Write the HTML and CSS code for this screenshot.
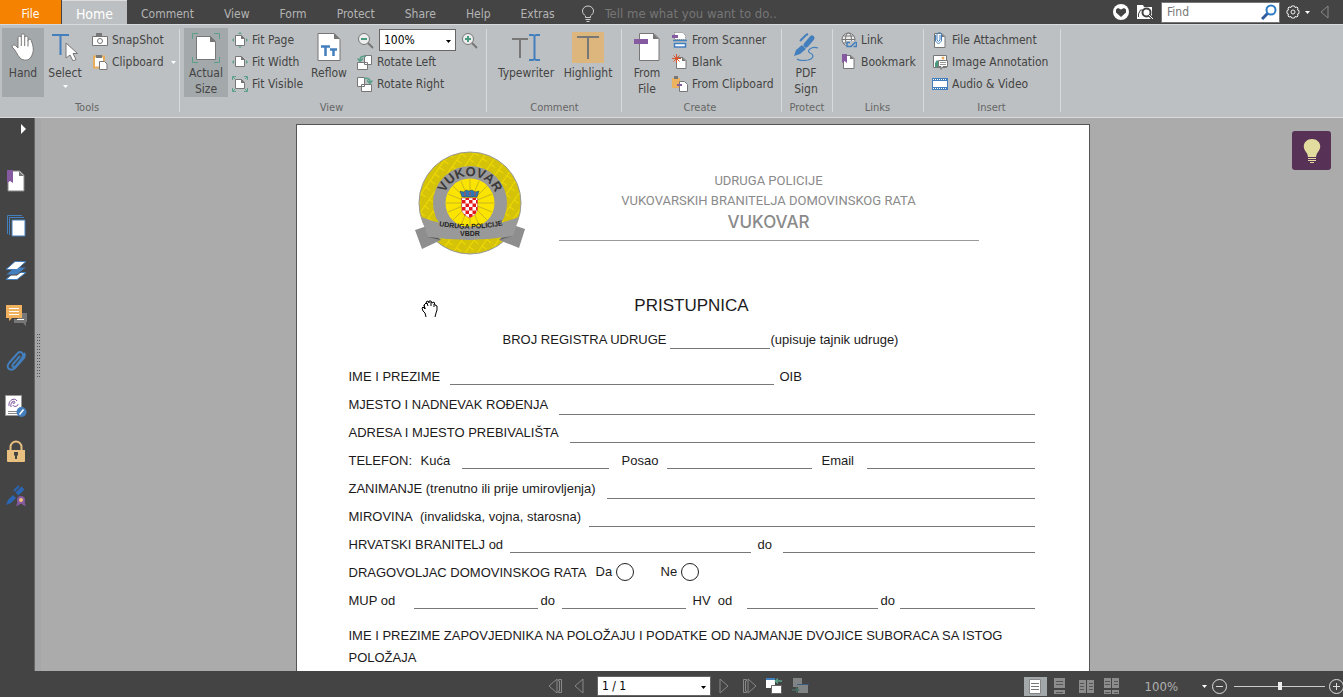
FILE: index.html
```html
<!DOCTYPE html>
<html lang="en">
<head>
<meta charset="utf-8">
<title>PDF Reader</title>
<link rel="stylesheet" href="styles.css">
</head>
<body>
<header class="tabbar">
  <nav class="tabs">
    <button class="tab tab-file">File</button>
    <button class="tab tab-active">Home</button>
    <button class="tab">Comment</button>
    <button class="tab">View</button>
    <button class="tab">Form</button>
    <button class="tab">Protect</button>
    <button class="tab">Share</button>
    <button class="tab">Help</button>
    <button class="tab">Extras</button>
  </nav>
  <label class="tell">
    <svg width="14" height="18" viewBox="0 0 14 18" fill="none" stroke="#d0d0d0"><path d="M4.500 12.500V11C3 9.500 1.500 8.500 1.500 6a5.500 5 0 0 1 11 0c0 2.500-1.500 3.500-3 5v1.500zM4.500 14.500h5M5.500 16.500h3"/></svg>
    <input type="text" placeholder="Tell me what you want to do.." aria-label="Tell me what you want to do">
  </label>
  <div class="tools-right">
    <button class="plain" aria-label="Favourite"><svg width="16" height="16" viewBox="0 0 16 16"><circle cx="8" cy="8" r="8" fill="#fff"/><path d="M8 13L3 8.500V5.500L5 4l3 1.500L11 4l2 1.500v3z" fill="#444"/></svg></button>
    <button class="plain" aria-label="Search folder"><svg width="17" height="16" viewBox="0 0 17 16"><path d="M0 15V1h6l1 2h8v12z" fill="#fff"/><path d="M1.500 13V10l2-4h10" fill="none" stroke="#444"/><circle cx="9.500" cy="8.500" r="4" fill="#fff" stroke="#444" stroke-width="2"/><path d="M12 11l4 4" stroke="#444" stroke-width="3"/><path d="M12 11l4 4" stroke="#fff" stroke-width="1"/></svg></button>
    <div class="find">
      <input type="text" placeholder="Find" aria-label="Find">
      <svg width="16" height="16" viewBox="0 0 16 16" fill="none"><path d="M1 15l6-6" stroke="#2e5c9e" stroke-width="3"/><circle cx="10" cy="6" r="4.500" stroke="#2f7cc4" stroke-width="2"/></svg>
    </div>
    <button class="plain settings" aria-label="Settings"><svg width="14" height="14" viewBox="0 0 14 14" fill="none" stroke="#eee"><path d="M5.500 1h3l.5 1.500 2-.5 1 1-.5 2 1.500.5v3l-1.500.5.5 2-1 1-2-.5-.5 1.500h-3L5 11.500l-2 .5-1-1 .5-2L1 8.500v-3L2.500 5 2 3l1-1 2 .5z"/><circle cx="7" cy="7" r="2"/></svg><svg width="5" height="3" viewBox="0 0 5 3"><path d="M0 0h5L2.500 3z" fill="#fff"/></svg></button>
    <button class="plain" aria-label="Collapse"><svg width="9" height="14" viewBox="0 0 9 14"><path d="M8 1v12L1 7z" fill="none" stroke="#888"/></svg></button>
  </div>
</header>

<section class="ribbon">
  <div class="group g-tools">
    <div class="group-body">
      <button class="big on"><svg width="24" height="28" viewBox="0 0 24 28"><path d="M7 15V4.500a1.700 1.700 0 0 1 3.300 0V2.500a1.700 1.700 0 0 1 3.400 0v2a1.700 1.700 0 0 1 3.300 0v3a1.700 1.700 0 0 1 3.300 0C23 15 23 19 20 24c-2 4-8 4-11 1C6 22 5 17 1 14c0-2 2-2.500 3.500-1.500z" fill="#fff" stroke="#777"/><path d="M10.300 4.500V13M13.700 4.500V13M17 7v6.500" stroke="#777" fill="none"/></svg><span>Hand</span></button>
      <button class="big"><svg width="26" height="28" viewBox="0 0 26 28"><path d="M0 2h17M8.500 2v20" stroke="#447fbd" stroke-width="2" fill="none"/><path d="M14 10v15l4-3 3 6 3-1.500-3-6h4.500z" fill="#fff" stroke="#777"/></svg><span>Select</span><svg class="drop" width="5" height="3" viewBox="0 0 5 3"><path d="M0 0h5L2.500 3z" fill="#fff"/></svg></button>
      <div class="stack">
        <button class="small"><svg width="16" height="16" viewBox="0 0 16 16"><path d="M.5 4.500h15v9H.5z" fill="#fff" stroke="#777"/><path d="M4 1h6v3H4z" fill="#777"/><circle cx="8" cy="9" r="2.500" fill="#fff" stroke="#777"/></svg>SnapShot</button>
        <button class="small"><svg width="16" height="16" viewBox="0 0 16 16"><path d="M2 2.500h10v11H2z" fill="#fff" stroke="#e8ad5c" stroke-width="2"/><path d="M4 1h6v3H4z" fill="#777"/><path d="M7.500 7.500h5l2.500 2.500v5.500H7.500z" fill="#fff" stroke="#777"/></svg>Clipboard<svg class="after" width="5" height="3" viewBox="0 0 5 3"><path d="M0 0h5L2.500 3z" fill="#fff"/></svg></button>
      </div>
    </div>
    <div class="group-name">Tools</div>
  </div>

  <div class="group g-view">
    <div class="group-body">
      <button class="big on"><svg width="28" height="30" viewBox="0 0 28 30"><path d="M.5 6V.5H6M22 .5h5.500V6M.5 24v5.500H6M22 29.500h5.500V24" fill="none" stroke="#5a9f88"/><path d="M4.500 3.500h14l5 5v18h-19z" fill="#fff" stroke="#777"/><path d="M18 3v6h6z" fill="#777"/></svg><span>Actual Size</span></button>
      <div class="stack stack-fit">
        <button class="small"><svg width="16" height="16" viewBox="0 0 16 16"><path d="M3.500 3.500h6l3 3v7h-9z" fill="#fff" stroke="#777"/><path d="M9 3v4h4z" fill="#777"/><path d="M8 0l2 2H6zM8 16l2-1.500H6zM0 8l2-2v4zM16 8l-2-2v4z" fill="#5a9f88"/></svg>Fit Page</button>
        <button class="small"><svg width="16" height="16" viewBox="0 0 16 16"><path d="M3.500 2.500h6l3 3v7h-9z" fill="#fff" stroke="#777"/><path d="M9 2v4h4z" fill="#777"/><path d="M0 8l2-2v4zM16 8l-2-2v4z" fill="#5a9f88"/></svg>Fit Width</button>
        <button class="small"><svg width="16" height="16" viewBox="0 0 16 16"><path d="M3.500 3.500h6l3 3v6h-9z" fill="#fff" stroke="#777"/><path d="M9 3v4h4z" fill="#777"/><path d="M.5 4V.5H4M12 .5h3.500V4M.5 12v3.500H4M12 15.500h3.500V12M1 1l2 2M15 1l-2 2M1 15l2-2M15 15l-2-2" fill="none" stroke="#5a9f88"/></svg>Fit Visible</button>
      </div>
      <button class="big reflow"><svg width="24" height="28" viewBox="0 0 24 28"><path d="M1 .5h16l6 6v21H1z" fill="#fff" stroke="#777"/><path d="M17 0v6h6z" fill="#777"/><path d="M4 13.500h9M8.500 13v10M13 16.500h7M16.500 16v7" stroke="#447fbd" stroke-width="2.500"/></svg><span>Reflow</span></button>
      <div class="stack">
        <div class="zoom-row">
          <button class="plain" aria-label="Zoom out"><svg width="17" height="17" viewBox="0 0 17 17"><path d="M10 10l6 6" stroke="#777" stroke-width="2"/><circle cx="7" cy="7" r="5.500" fill="#eee" stroke="#777"/><path d="M4 7h6" stroke="#4a9a80" stroke-width="2"/></svg></button>
          <div class="combo"><select aria-label="Zoom"><option>100%</option></select><svg width="5" height="3" viewBox="0 0 5 3"><path d="M0 0h5L2.500 3z"/></svg></div>
          <button class="plain" aria-label="Zoom in"><svg width="17" height="17" viewBox="0 0 17 17"><path d="M10 10l6 6" stroke="#777" stroke-width="2"/><circle cx="7" cy="7" r="5.500" fill="#eee" stroke="#777"/><path d="M4 7h6M7 4v6" stroke="#4a9a80" stroke-width="2"/></svg></button>
        </div>
        <button class="small"><svg width="16" height="16" viewBox="0 0 16 16"><path d="M7.500 1.500h7v9h-7zM.5 8.500h10v7H.5z" fill="#fff" stroke="#777"/><path d="M9 2.500C5 1.500 3 3 3 6M.5 4.500L3 7.500l3-3" fill="none" stroke="#5a9f88" stroke-width="1.500"/></svg>Rotate Left</button>
        <button class="small"><svg width="16" height="16" viewBox="0 0 16 16"><path d="M.5 1.500h7v9h-7zM4.500 8.500h10v7h-10z" fill="#fff" stroke="#777"/><path d="M7 2.500c4-1 6 .5 6 3.500M10 4.500l3 3 2.500-3" fill="none" stroke="#5a9f88" stroke-width="1.500"/></svg>Rotate Right</button>
      </div>
    </div>
    <div class="group-name">View</div>
  </div>

  <div class="group g-comment">
    <div class="group-body">
      <button class="big"><svg width="30" height="30" viewBox="0 0 30 30"><path d="M1 7h16M9 7v19" stroke="#777" stroke-width="2"/><path d="M18 3h4l1.500 1L25 3h4M18 28h4l1.500-1 1.500 1h4M23.500 4v23" fill="none" stroke="#447fbd" stroke-width="2"/></svg><span>Typewriter</span></button>
      <button class="big"><svg width="32" height="32" viewBox="0 0 32 32"><path d="M0 0h32v31H0z" fill="#dcb67d"/><path d="M5 5h22M16 5v22" stroke="#777" stroke-width="2"/></svg><span>Highlight</span></button>
    </div>
    <div class="group-name">Comment</div>
  </div>

  <div class="group g-create">
    <div class="group-body">
      <button class="big"><svg width="26" height="28" viewBox="0 0 26 28"><path d="M5.500.5H20l5 5v22H5.500z" fill="#fff" stroke="#777"/><path d="M19 0v6h6z" fill="#777"/><path d="M0 6h14v5H0z" fill="#865aa0"/></svg><span>From File</span></button>
      <div class="stack">
        <button class="small"><svg width="16" height="16" viewBox="0 0 16 16"><path d="M2.500.5h8l3 3v4h-11z" fill="#fff" stroke="#777" stroke-dasharray="1 1"/><path d="M0 3h6v3H0z" fill="#865aa0"/><path d="M1 8.500h14M2.500 11.500h11v3.500h-11z" stroke="#447fbd" fill="#fff" stroke-width="1.500"/></svg>From Scanner</button>
        <button class="small"><svg width="16" height="16" viewBox="0 0 16 16"><path d="M4.500 3.500H11l3 3v8H4.500z" fill="#fff" stroke="#777"/><path d="M10 3v4h4z" fill="#777"/><path d="M4.500 0v9M0 4.500h9M1.500 1.500l6 6M7.500 1.500l-6 6" stroke="#d9532c"/></svg>Blank</button>
        <button class="small"><svg width="16" height="16" viewBox="0 0 16 16"><path d="M0 2h8v10H0z" fill="#ecb25f"/><path d="M2 0h4v3H2z" fill="#777"/><path d="M7.500 5.500h5l3 3v7h-8z" fill="#fff" stroke="#777"/><path d="M5 8h5v2H5z" fill="#865aa0"/></svg>From Clipboard</button>
      </div>
    </div>
    <div class="group-name">Create</div>
  </div>

  <div class="group g-protect">
    <div class="group-body">
      <button class="big"><svg width="26" height="28" viewBox="0 0 26 28" fill="none" stroke="#447fbd"><path d="M7 8l6-6 2-1" stroke-width="2"/><path d="M13 12l6-7" stroke-width="5" stroke-linecap="round"/><path d="M1 23l2-6 6-5 4 4-6 5z" fill="#447fbd" stroke="none"/><path d="M25 15c-7-2-12 3-8 5 5 2 3 6-2 7-3 .5-9 .5-11-1" stroke-width="1.200"/></svg><span>PDF Sign</span></button>
    </div>
    <div class="group-name">Protect</div>
  </div>

  <div class="group g-links">
    <div class="group-body">
      <div class="stack">
        <button class="small"><svg width="16" height="16" viewBox="0 0 16 16" fill="none"><circle cx="7.500" cy="7.500" r="6.500" fill="#eee" stroke="#777"/><ellipse cx="7.500" cy="7.500" rx="3" ry="6.500" stroke="#777"/><path d="M1 7.500h13M2.500 4h10M2 11h11" stroke="#777"/><path d="M5 9h11v7H5z" fill="#bcc0c2"/><path d="M9 10.500H6v4h4l4-4h1.500v4h-3" stroke="#447fbd" stroke-width="1.500"/></svg>Link</button>
        <button class="small"><svg width="16" height="16" viewBox="0 0 16 16"><path d="M2.500 1.500H10l3 3v10H2.500z" fill="#fff" stroke="#777"/><path d="M9 1v4h4z" fill="#777"/><path d="M1 0h5v9L3.500 7 1 9z" fill="#865aa0"/></svg>Bookmark</button>
      </div>
    </div>
    <div class="group-name">Links</div>
  </div>

  <div class="group g-insert">
    <div class="group-body">
      <div class="stack">
        <button class="small"><svg width="16" height="16" viewBox="0 0 16 16" fill="none"><path d="M2.500 1.500H10l3 3v11H2.500z" fill="#fff" stroke="#777"/><path d="M9 1v4h4z" fill="#777"/><path d="M3.500 3v6l3 3 3-3V2.500C9.500 0 5 0 5 2.500V8l1.500 1.500L8 8V3" stroke="#447fbd"/></svg>File Attachment</button>
        <button class="small"><svg width="16" height="16" viewBox="0 0 16 16"><path d="M1.500 1.500h13v12h-13z" fill="#fff" stroke="#777"/><path d="M3 13V9l2-3 2 2v5z" fill="#4a9a80"/><circle cx="11" cy="4" r="1.500" fill="#e8ad5c"/><path d="M6.500 6.500h9v6H11l-2 3v-3H6.500z" fill="#fff" stroke="#777"/><path d="M8 8.500h6M8 10.500h6" stroke="#999"/></svg>Image Annotation</button>
        <button class="small"><svg width="16" height="14" viewBox="0 0 16 14"><path d="M.5 1.500h15v11H.5z" fill="#fff" stroke="#447fbd"/><path d="M0 2.500h16M0 11.500h16" stroke="#447fbd" stroke-width="3"/><path d="M1 2.500h14M1 11.500h14" stroke="#fff" stroke-dasharray="1 1"/></svg>Audio &amp; Video</button>
      </div>
    </div>
    <div class="group-name">Insert</div>
  </div>
</section>

<main class="workspace">
  <aside class="sidebar">
    <button class="side-toggle" aria-label="Expand panel"><svg width="5" height="10" viewBox="0 0 5 10"><path d="M0 0l5 5-5 5z" fill="#fff"/></svg></button>
    <button class="side" aria-label="Bookmarks"><svg width="18" height="22" viewBox="0 0 18 22"><path d="M1 1h12l4 4v16H1z" fill="#fff" stroke="#888"/><path d="M12 1v5h5z" fill="#777"/><path d="M0 0h6v13l-3-2-3 2z" fill="#865aa0"/></svg></button>
    <button class="side" aria-label="Pages"><svg width="19" height="22" viewBox="0 0 19 22" fill="none" stroke="#447fbd"><path d="M.5 19V.5H15M2.500 20V2.500H17"/><path d="M5 5h13v16H5z" fill="#fff"/></svg></button>
    <button class="side" aria-label="Layers"><svg width="22" height="20" viewBox="0 0 22 20" stroke="#447fbd"><path d="M1 18.500h11l9-7H9z" fill="#fff"/><path d="M0 14h12l10-8H10z" fill="#447fbd" stroke="#444"/><path d="M1 8.500h11l9-8H10z" fill="#fff"/></svg></button>
    <button class="side" aria-label="Comments"><svg width="21" height="21" viewBox="0 0 21 21"><path d="M12 8h9v9h-1v4l-3-3H8v-4h4z" fill="#777"/><path d="M0 0h16v13H6l-3 3v-3H0z" fill="#f0b25e"/><path d="M3 3.500h10M3 6.500h10M3 9.500h10M11 14.500h7" stroke="#fff"/></svg></button>
    <button class="side" aria-label="Attachments"><svg width="20" height="22" viewBox="0 0 20 22" fill="none" stroke="#447fbd" stroke-width="2"><path d="M14 6l-7 8c-2 3 1 4 3 2l6-8c3-5-2-8-5-4L3 13c-4 5 2 9 6 5l9-10c1-2 1-4 0-5"/></svg></button>
    <button class="side" aria-label="Signatures"><svg width="22" height="22" viewBox="0 0 22 22" fill="none"><path d="M.5.500h16v20H.5z" fill="#fff" stroke="#999"/><path d="M4 11C3 5 10 2 12 6M6 12C5 7 9 5 10 7c0 2-3 2-2 0M8 10c0 2 5 2 5-1" stroke="#7a4f9c"/><path d="M3 16.500h9M3 18.500h9" stroke="#888"/><circle cx="16.500" cy="17" r="5" fill="#447fbd"/><path d="M14.500 19.500l4-5" stroke="#fff" stroke-width="1.500"/></svg></button>
    <button class="side" aria-label="Security"><svg width="18" height="22" viewBox="0 0 18 22"><path d="M3.500 10V7a5.500 5.500 0 0 1 11 0v3" fill="none" stroke="#e9c07f" stroke-width="2"/><path d="M0 10h18v11q0 1-1 1H1q-1 0-1-1z" fill="#e9c07f"/><path d="M7 12h4v3l-1 1v3H8v-3l-1-1z" fill="#444"/></svg></button>
    <button class="side" aria-label="Digital signatures"><svg width="20" height="22" viewBox="0 0 20 22"><path d="M8 6l5-5" stroke="#2a66b4" stroke-width="2"/><path d="M11 9l6-6" stroke="#2a66b4" stroke-width="4"/><path d="M0 20l2-5 5-5 3 3-5 5z" fill="#2a66b4"/><path d="M12 16l-2 5 3-1 2-2 2 2 3 1-2-5z" fill="#865aa0"/><circle cx="15" cy="15" r="3" fill="#f4c078" stroke="#865aa0" stroke-width="2"/></svg></button>
  </aside>
  <div class="splitter"><svg width="4" height="44" viewBox="0 0 4 44" stroke="#555" stroke-dasharray="1 2"><path d="M.5 0v44M2.500 0v44"/></svg></div>

  <div class="canvas">
    <article class="paper">
      <div class="letterhead">
        <svg class="emblem" width="110" height="104" viewBox="0 0 110 104">
          <defs>
            <pattern id="weave" width="10" height="8" patternUnits="userSpaceOnUse" patternTransform="rotate(35)"><rect width="10" height="8" fill="#f0da00"/><path d="M0 0h5M0 2h5M0 4h5M0 6h5M6 0v8M8 0v8" fill="none" stroke="#a3961c" stroke-width=".7"/></pattern>
            <pattern id="checks" width="7" height="7" patternUnits="userSpaceOnUse" x="47" y="49"><rect width="7" height="7" fill="#fff"/><path d="M0 0h3.500v3.500H0zM3.500 3.500H7V7H3.500z" fill="#e3191c"/></pattern>
            <path id="arc" d="M28 52a27 27 0 0 1 54 0"/>
            <path id="band" d="M15 73Q55 83 97 72"/>
          </defs>
          <circle cx="55" cy="52" r="51" fill="url(#weave)" stroke="#999"/>
          <circle cx="55" cy="52" r="37" fill="#999"/>
          <circle cx="55" cy="52" r="24.500" fill="#fbe400"/>
          <path d="M55 28v48M31 52h48M38 35l34 34M72 35L38 69M46 30l18 44M64 30L46 74M33 43l44 18M77 43L33 61" stroke="#b5a528" stroke-width=".7"/>
          <path d="M46.500 47h16v12q-1 5-8 8-7-3-8-8z" fill="url(#checks)" stroke="#b44" stroke-width=".5"/>
          <path d="M45 40l4 1 2-2 3 1 3-1 3 2 4-1-2 6H47z" fill="#2b78b4" stroke="#345" stroke-width=".5"/>
          <path d="M50 41v4M55 41v4M60 41v4" stroke="#c44"/>
          <path d="M0 79l12-4 14 14-19 9zM110 78l-12-4-14 15 20 8z" fill="#8e8e8e"/>
          <path d="M6 66Q55 85 104 66L98 85Q55 92 13 86z" fill="#999"/>
          <path d="M12 86l14 3-3-2zM98 85l-14 4 3-2z" fill="#555"/>
          <text class="emblem-top"><textPath href="#arc" startOffset="50%" text-anchor="middle">VUKOVAR</textPath></text>
          <text class="emblem-band"><textPath href="#band" startOffset="50%" text-anchor="middle">UDRUGA POLICIJE</textPath></text>
          <text class="emblem-band" x="55" y="85" text-anchor="middle">VBDR</text>
        </svg>
        <div class="association">
          <p>UDRUGA POLICIJE</p>
          <p>VUKOVARSKIH BRANITELJA DOMOVINSKOG RATA</p>
          <p class="city">VUKOVAR</p>
        </div>
      </div>
      <h1>PRISTUPNICA</h1>
      <form>
        <div class="registry"><label for="reg">BROJ REGISTRA UDRUGE</label><input id="reg" type="text"><span>(upisuje tajnik udruge)</span></div>
        <div class="row r-name"><label for="ime">IME I PREZIME</label><input id="ime" type="text"><label for="oib" class="oib">OIB</label><input id="oib" class="bare" type="text"></div>
        <div class="row low r-birth"><label for="rod">MJESTO I NADNEVAK ROĐENJA</label><input id="rod" type="text"></div>
        <div class="row low r-address"><label for="adr">ADRESA I MJESTO PREBIVALIŠTA</label><input id="adr" type="text"></div>
        <div class="row r-phone"><span>TELEFON:</span><label for="kuca">Kuća</label><input id="kuca" type="text"><label for="posao">Posao</label><input id="posao" type="text"><label for="email">Email</label><input id="email" type="text"></div>
        <div class="row low r-job"><label for="zan">ZANIMANJE (trenutno ili prije umirovljenja)</label><input id="zan" type="text"></div>
        <div class="row low r-pension"><label for="mir">MIROVINA&nbsp; (invalidska, vojna, starosna)</label><input id="mir" type="text"></div>
        <div class="row r-veteran"><label for="hb1">HRVATSKI BRANITELJ od</label><input id="hb1" type="text"><label for="hb2">do</label><input id="hb2" type="text"></div>
        <div class="row r-volunteer"><span>DRAGOVOLJAC DOMOVINSKOG RATA</span><label>Da<input type="radio" name="drag"></label><label>Ne<input type="radio" name="drag"></label></div>
        <div class="row r-service"><label for="mup1">MUP od</label><input id="mup1" type="text"><label for="mup2">do</label><input id="mup2" type="text"><label for="hv1">HV&nbsp; od</label><input id="hv1" type="text"><label for="hv2">do</label><input id="hv2" type="text"></div>
        <p class="witness">IME I PREZIME ZAPOVJEDNIKA NA POLOŽAJU I PODATKE OD NAJMANJE DVOJICE SUBORACA SA ISTOG POLOŽAJA</p>
      </form>
      <svg class="cursor" width="18" height="18" viewBox="0 0 18 18"><path d="M5 17l-1-4-2-2-1-3 1-1 2 2-1-4 2-2 1 1-1-2 2-1 1 2V1h2l1 2 2-1 1 3 2 1v4l-1 3-1 4" fill="#fff" stroke="#000"/><path d="M4 9L3 5M7 6L6 3M10 6V2M13 7V4" stroke="#000" fill="none"/></svg>
    </article>
    <button class="hint" aria-label="Tips"><svg width="18" height="26" viewBox="0 0 18 26"><path d="M5 19q0-3-2-5C-2 8 2 1 9 1s11 7 6 13q-2 2-2 5z" fill="#e2dc9e"/><path d="M5 20.500h8M5 22.500h8M7 24.500h4" stroke="#e2dc9e"/></svg></button>
  </div>
</main>

<footer class="status">
  <div class="pager">
    <button class="plain" aria-label="First page"><svg width="16" height="16" viewBox="0 0 16 16" fill="none" stroke="#888"><path d="M9 1v14L1 8zM10.500 1.500h3v13h-3V13h1V3h-1z"/></svg></button>
    <button class="plain" aria-label="Previous page"><svg width="10" height="16" viewBox="0 0 10 16" fill="none" stroke="#888"><path d="M9 1v14L1 8z"/></svg></button>
    <div class="combo pages"><select aria-label="Page"><option>1 / 1</option></select><svg width="5" height="3" viewBox="0 0 5 3"><path d="M0 0h5L2.500 3z"/></svg></div>
    <button class="plain" aria-label="Next page"><svg width="10" height="16" viewBox="0 0 10 16" fill="none" stroke="#888"><path d="M1 1v14l8-7z"/></svg></button>
    <button class="plain last" aria-label="Last page"><svg width="16" height="16" viewBox="0 0 16 16" fill="none" stroke="#888"><path d="M7 1v14l8-7zM5.500 1.500h-3v13h3V13h-1V3h1z"/></svg></button>
    <button class="plain" aria-label="Previous view"><svg width="16" height="16" viewBox="0 0 16 16"><path d="M0 1h9v9H0z" fill="#fff"/><path d="M0 0h9v2H0z" fill="#447fbd"/><path d="M5.500 7.500h10v8h-10z" fill="#fff" stroke="#666"/><path d="M9 3h7M12 .5L9.500 3 12 5.500" fill="none" stroke="#5a9f88" stroke-width="1.500"/></svg></button>
    <button class="plain" aria-label="Next view"><svg width="17" height="16" viewBox="0 0 17 16"><path d="M1 0h9v9H1zM6 7h10v8H6z" fill="#808484"/><path d="M5 6.500h12" stroke="#3d5d80"/><path d="M0 12h7M4 9.500L6.500 12 4 14.500" fill="none" stroke="#4a6e64" stroke-width="1.500"/></svg></button>
  </div>
  <div class="layouts">
    <button class="layout on" aria-label="Single page"><svg width="12" height="15" viewBox="0 0 12 15"><path d="M.5.500h11v14H.5z" fill="#fff" stroke="#888"/><path d="M2 4.500h8M2 7.500h8M2 10.500h8" stroke="#777"/></svg></button>
    <button class="plain continuous" aria-label="Continuous"><svg width="11" height="16" viewBox="0 0 11 16"><path d="M0 0h11v10H0zM0 12h11v4H0z" fill="#8c8c8c"/><path d="M2 3.500h7M2 6.500h7M2 14.500h7" stroke="#555"/></svg></button>
    <button class="plain" aria-label="Facing"><svg width="15" height="13" viewBox="0 0 15 13"><path d="M0 0h7v13H0zM8 0h7v13H8z" fill="#8c8c8c"/><path d="M1 3.500h4M1 6.500h4M1 9.500h4M10 3.500h4M10 6.500h4M10 9.500h4" stroke="#555"/></svg></button>
    <button class="plain" aria-label="Continuous facing"><svg width="16" height="16" viewBox="0 0 16 16"><path d="M0 0h7v10H0zM8 0h7v10H8zM0 12h7v4H0zM8 12h7v4H8z" fill="#8c8c8c"/><path d="M1 3.500h5M1 6.500h5M10 3.500h4M10 6.500h4M1 14.500h5M10 14.500h4" stroke="#555"/></svg></button>
    <button class="plain percent">100%<svg width="5" height="3" viewBox="0 0 5 3"><path d="M0 0h5L2.500 3z" fill="#fff"/></svg></button>
    <button class="plain" aria-label="Zoom out"><svg width="15" height="15" viewBox="0 0 15 15" fill="none" stroke="#ddd"><circle cx="7.500" cy="7.500" r="7"/><path d="M4 7.500h7"/></svg></button>
    <input class="slider" type="range" min="0" max="100" value="50" aria-label="Zoom level">
    <button class="plain" aria-label="Zoom in"><svg width="15" height="15" viewBox="0 0 15 15" fill="none" stroke="#ddd"><circle cx="7.500" cy="7.500" r="7"/><path d="M4 7.500h7M7.500 4v7"/></svg></button>
  </div>
</footer>
</body>
</html>
```
FILE: styles.css
```css
* { box-sizing: border-box; }
body {
  margin: 0;
  height: 100vh;
  display: flex;
  flex-direction: column;
  overflow: hidden;
  background: #444;
  color: #444;
  font-family: "DejaVu Sans Condensed", "Noto Sans", sans-serif;
  font-size: 12px;
}
button, input, select { font: inherit; color: inherit; margin: 0; padding: 0; border: 0; background: none; border-radius: 0; }
svg { display: block; flex: none; }
p, h1 { margin: 0; font-weight: normal; }
.plain { display: flex; align-items: center; justify-content: center; flex: none; }

/* Tab bar */
.tabbar { display: flex; flex: none; height: 24px; color: #b4b4b4; }
.tabs { display: flex; }
.tab { padding: 3px 14px 0; height: 24px; margin-right: 2px; }
.tab-file { width: 61px; margin: 0; background: #f58200; color: #fff; }
.tab-active { width: 65px; margin: 0 0 0 1px; padding: 3px 0 0; background: #bcc0c2; border-top: 1px solid #ddd; color: #fff; font-size: 14px; }
.tell { display: flex; align-items: center; gap: 10px; margin-left: 10px; padding-top: 3px; flex: 1; font-size: 13px; }
.tell input { width: 200px; }
.tell input::placeholder { color: #767676; opacity: 1; }
.tools-right { display: flex; align-items: center; gap: 8px; padding-right: 14px; }
.find { display: flex; align-items: center; width: 119px; height: 21px; margin-left: -1px; padding: 0 2px 0 5px; background: #fff; border: 1px solid #777; }
.find input { flex: 1; min-width: 0; color: #444; }
.find input::placeholder { color: #777; opacity: 1; }
.settings { gap: 5px; margin: 0 2px 0 -2px; }

/* Ribbon */
.ribbon { display: flex; flex: none; background: #bcc0c2; border-top: 1px solid #d8dadb; border-bottom: 1px solid #d8dadb; padding-top: 3px; }
.group { display: flex; flex-direction: column; position: relative; }
.group::after { content: ""; position: absolute; right: 0; top: 1px; bottom: 5px; width: 1px; background: #d8dadb; }
.group-body { display: flex; height: 69px; }
.group-name { height: 20px; line-height: 22px; text-align: center; color: #666; font-size: 11px; padding-right: 8px; }
.g-tools { width: 180px; padding-left: 2px; }
.g-view { width: 307px; padding-left: 4px; }
.g-comment { width: 135px; padding-left: 8px; }
.g-create { width: 160px; padding-left: 4px; }
.g-protect { width: 51px; padding-left: 3px; }
.g-links { width: 91px; padding-left: 2px; }
.g-insert { width: 137px; padding-left: 2px; }
.g-protect .group-name, .g-links .group-name, .g-insert .group-name { padding-right: 4px; }

.big { display: flex; flex-direction: column; align-items: center; width: 42px; padding-top: 4px; line-height: 16px; }
.big span { margin-top: auto; height: 32px; }
.big > svg:first-child { margin-top: 1px; }
.g-tools .big { position: relative; }
.big .drop { position: absolute; bottom: 9px; }
.g-view .big { width: 44px; }
.g-comment .big { width: 62px; }
.g-comment .big > svg:first-child { margin-top: 0; }
.on { background: #a3a8ab; }
.stack { display: flex; flex-direction: column; padding: 1px 0 0 6px; }
.stack-fit { padding-left: 4px; width: 79px; }
.small { display: flex; align-items: center; gap: 4px; height: 22px; white-space: nowrap; }
.small .after { margin-left: 3px; }
.zoom-row { display: flex; gap: 5px; height: 22px; align-items: center; }
.combo { position: relative; width: 77px; height: 22px; background: #fff; border: 1px solid #666; color: #000; }
.combo select { appearance: none; width: 100%; height: 100%; padding-left: 4px; }
.combo svg { position: absolute; right: 4px; top: 50%; }
.g-create .stack { padding-left: 4px; }

/* Workspace */
.workspace { display: flex; flex: 1; min-height: 0; }
.sidebar { display: flex; flex-direction: column; flex: none; width: 34px; }
.side-toggle { display: flex; justify-content: flex-end; height: 40px; padding: 6px 8px 0 0; }
.side { display: flex; align-items: center; justify-content: center; height: 45px; padding-right: 2px; }
.splitter { flex: none; display: flex; align-items: center; width: 7px; padding: 0 0 78px 2px; background: #a5a7a9; border-left: 1px solid #666; }
.canvas { position: relative; flex: 1; display: flex; justify-content: center; align-items: flex-start; overflow: hidden; padding: 6px 0 0 1px; background: #ababab; }
.hint { position: absolute; top: 13px; right: 12px; width: 39px; height: 39px; display: flex; align-items: center; justify-content: center; background: #573256; border-radius: 3px; }

/* Document page */
.paper { position: relative; width: 794px; height: 1123px; padding: 26px 54px 0 52px; background: #fff; border: 1px solid #555; color: #1c1a1b; font-family: "Liberation Sans", sans-serif; font-size: 13px; }
.letterhead { display: flex; gap: 34px; padding-left: 66px; }
.association { width: 420px; height: 90px; padding-top: 20px; border-bottom: 1px solid #999; color: #8a8a8a; font-family: Roboto, sans-serif; text-align: center; line-height: 20px; white-space: nowrap; }
.city { font-family: Inter, sans-serif; font-size: 17px; font-weight: 500; line-height: 22px; }
.emblem-top { font: bold 13px "Liberation Sans", sans-serif; fill: #3a3a3a; }
.emblem-band { font: bold 7px "Liberation Sans", sans-serif; fill: #222; }
h1 { margin-top: 38px; text-align: center; font-size: 17px; line-height: 26px; }
.registry { display: flex; justify-content: center; height: 28px; margin: 6px 0 9px 18px; line-height: 30px; }
.registry input { width: 100px; height: 24px; margin: 0 1px 0 3px; }
.paper input[type="text"] { border-bottom: 1px solid #777; min-width: 0; }
.paper input.bare { border: 0; }
.row { display: grid; height: 28px; line-height: 30px; white-space: nowrap; }
.row input[type="text"] { height: 23px; }
.low input[type="text"] { height: 25px; }
.r-name { grid-template-columns: 101px 324px 40px 1fr; }
.oib { padding-left: 6px; }
.r-birth { grid-template-columns: 210px 1fr; }
.r-address { grid-template-columns: 221px 1fr; }
.r-phone { grid-template-columns: 72px 41px 147px 58px 145px 55px 1fr; }
.r-phone label:nth-of-type(2) { padding-left: 13px; }
.r-phone label:nth-of-type(3) { padding-left: 10px; }
.r-job { grid-template-columns: 258px 1fr; }
.r-pension { grid-template-columns: 240px 1fr; }
.r-veteran { grid-template-columns: 161px 241px 32px 1fr; }
.r-veteran label + input + label { padding-left: 7px; }
.r-volunteer { grid-template-columns: 247px 65px 1fr; }
.r-volunteer label { display: flex; align-items: center; gap: 4px; height: 28px; }
.row input[type="radio"] { appearance: none; width: 18px; height: 18px; border: 1px solid #222; border-radius: 50%; }
.r-service { grid-template-columns: 65px 124px 24px 124px 61px 131px 22px 1fr; }
.r-service input + label { padding-left: 3px; }
.r-service label[for="hv1"] { padding-left: 7px; }
.witness { margin-top: 11px; line-height: 22px; }
.cursor { position: absolute; left: 124px; top: 175px; }

/* Status bar */
.status { display: flex; flex: none; justify-content: space-between; align-items: center; height: 26px; padding: 4px 0 0 548px; }
.pager { display: flex; align-items: center; gap: 10px; }
.pages { width: 114px; height: 20px; margin: 0 -2px 0 3px; }
.pager .last { margin: 0 -1px 0 2px; }
.layouts { display: flex; align-items: center; gap: 10px; flex: none; margin-right: -1px; }
.layout { display: flex; align-items: center; justify-content: center; width: 23px; height: 19px; }
.layouts .layout { margin-right: -3px; }
.layouts .continuous { margin-right: 4px; }
.percent { gap: 24px; color: #b0b0b0; margin: 0 -5px 0 15px; font-size: 13px; }
.slider { appearance: none; width: 91px; height: 15px; margin: 0 -6px 0 -3px; background: linear-gradient(#ccc, #ccc) center / 100% 1px no-repeat; }
.slider::-webkit-slider-thumb { appearance: none; width: 4px; height: 8px; background: #eee; }
```
